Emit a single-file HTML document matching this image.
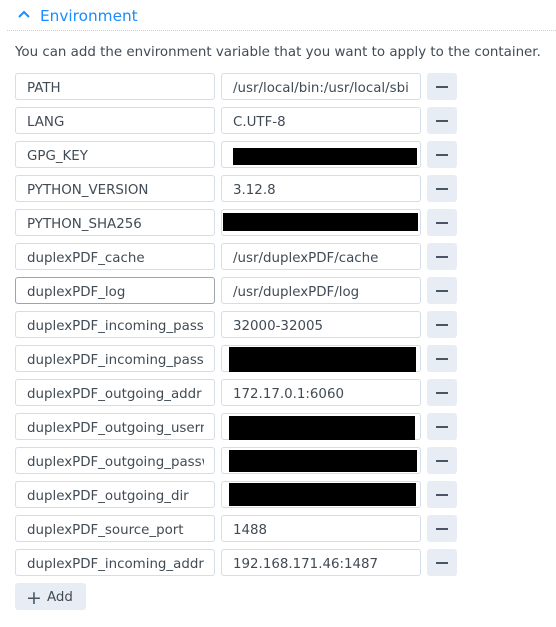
<!DOCTYPE html><html><head><style>
body{margin:0;width:556px;height:627px;background:#fff;font-family:"DejaVu Sans","Liberation Sans",sans-serif;color:#414b55;position:relative;overflow:hidden}
.hd{position:absolute;left:40px;top:7px;font-size:15.3px;color:#1a8cff}
.chev{position:absolute;left:17px;top:9px}
.dot{position:absolute;left:7px;right:0;top:30px;border-top:1px dotted #c8d0da}
.desc{position:absolute;left:15px;top:45px;font-size:13.4px;white-space:nowrap}
.f{position:absolute;height:25px;border:1px solid #d5dde6;border-radius:3px;font-size:13.4px;line-height:29px;padding-left:11px;padding-right:10px;box-sizing:content-box;overflow:hidden;white-space:nowrap;background:#fff}
.f span{display:block;overflow:hidden}
.l{left:15px;width:177px}.r{left:221px;width:177px}
.b{position:absolute;left:427px;width:30px;height:27px;background:#e8edf5;border-radius:3px}
.b:after{content:"";position:absolute;left:9px;top:13px;width:12px;height:2px;background:#4a5563}
.k{position:absolute;background:#000}
.add{position:absolute;left:15px;top:583px;width:71px;height:27px;background:#e8edf5;border-radius:3px;font-size:13.4px;line-height:29px}
</style></head><body>
<svg class="chev" width="14" height="10"><path d="M2 8 L7 3 L12 8" stroke="#1a8cff" stroke-width="2" fill="none"/></svg>
<div class="hd">Environment</div><div class="dot"></div>
<div class="desc">You can add the environment variable that you want to apply to the container.</div>
<div class="f l" style="top:73px"><span>PATH</span></div><div class="f r" style="top:73px"><span>/usr/local/bin:/usr/local/sbin</span></div><div class="b" style="top:73px"></div>
<div class="f l" style="top:107px"><span>LANG</span></div><div class="f r" style="top:107px"><span>C.UTF-8</span></div><div class="b" style="top:107px"></div>
<div class="f l" style="top:141px"><span>GPG_KEY</span></div><div class="f r" style="top:141px"></div><div class="b" style="top:141px"></div>
<div class="f l" style="top:175px"><span>PYTHON_VERSION</span></div><div class="f r" style="top:175px"><span>3.12.8</span></div><div class="b" style="top:175px"></div>
<div class="f l" style="top:209px"><span>PYTHON_SHA256</span></div><div class="f r" style="top:209px"></div><div class="b" style="top:209px"></div>
<div class="f l" style="top:243px"><span>duplexPDF_cache</span></div><div class="f r" style="top:243px"><span>/usr/duplexPDF/cache</span></div><div class="b" style="top:243px"></div>
<div class="f l" style="top:277px;border-color:#9aa5b1"><span>duplexPDF_log</span></div><div class="f r" style="top:277px"><span>/usr/duplexPDF/log</span></div><div class="b" style="top:277px"></div>
<div class="f l" style="top:311px"><span>duplexPDF_incoming_passive</span></div><div class="f r" style="top:311px"><span>32000-32005</span></div><div class="b" style="top:311px"></div>
<div class="f l" style="top:345px"><span>duplexPDF_incoming_passwd</span></div><div class="f r" style="top:345px"></div><div class="b" style="top:345px"></div>
<div class="f l" style="top:379px"><span>duplexPDF_outgoing_addr</span></div><div class="f r" style="top:379px"><span>172.17.0.1:6060</span></div><div class="b" style="top:379px"></div>
<div class="f l" style="top:413px"><span>duplexPDF_outgoing_username</span></div><div class="f r" style="top:413px"></div><div class="b" style="top:413px"></div>
<div class="f l" style="top:447px"><span>duplexPDF_outgoing_passwd</span></div><div class="f r" style="top:447px"></div><div class="b" style="top:447px"></div>
<div class="f l" style="top:481px"><span>duplexPDF_outgoing_dir</span></div><div class="f r" style="top:481px"></div><div class="b" style="top:481px"></div>
<div class="f l" style="top:515px"><span>duplexPDF_source_port</span></div><div class="f r" style="top:515px"><span>1488</span></div><div class="b" style="top:515px"></div>
<div class="f l" style="top:549px"><span>duplexPDF_incoming_addr</span></div><div class="f r" style="top:549px"><span>192.168.171.46:1487</span></div><div class="b" style="top:549px"></div>
<div class="k" style="left:233px;top:148px;width:184px;height:17px"></div>
<div class="k" style="left:223px;top:213px;width:195px;height:18px"></div>
<div class="k" style="left:229px;top:347px;width:187px;height:25px"></div>
<div class="k" style="left:229px;top:416px;width:186px;height:24px"></div>
<div class="k" style="left:229px;top:450px;width:188px;height:22px"></div>
<div class="k" style="left:229px;top:483px;width:187px;height:23px"></div>
<div class="add"><span style="position:absolute;left:11px;top:1px;font-size:19px;color:#4a5563">+</span><span style="position:absolute;left:32px">Add</span></div>
</body></html>
